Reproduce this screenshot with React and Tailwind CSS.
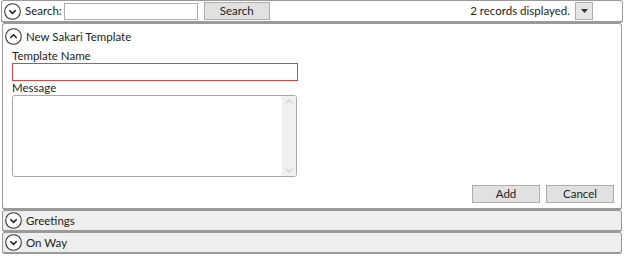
import React from 'react';

// Circled chevron toggle used by each expander header
const Toggle = ({ up = false }) => (
  <svg width="17" height="17" viewBox="0 0 17 17" className="shrink-0">
    <circle cx="8.5" cy="8.5" r="7.8" fill="white" stroke="#333" strokeWidth="1.1" />
    {up ? (
      <path d="M5.3 10 L8.5 6.8 L11.7 10" fill="none" stroke="#222" strokeWidth="1.6" />
    ) : (
      <path d="M5.3 7.2 L8.5 10.4 L11.7 7.2" fill="none" stroke="#222" strokeWidth="1.6" />
    )}
  </svg>
);

const Btn = ({ children, className = '' }) => (
  <button className={`h-[18px] border border-[#adadad] bg-[#e1e1e1] text-[11.5px] leading-none text-[#222] ${className}`}>
    {children}
  </button>
);

const Collapsed = ({ title }) => (
  <div className="h-[22px] mx-[2px] border border-[#9a9a9a] border-b-2 rounded-[3px] bg-[#eeeeee] flex items-center gap-[4px] px-[2px]">
    <Toggle />
    <span className="text-[11.5px] text-[#222]">{title}</span>
  </div>
);

export default function App() {
  return (
    <div className="w-[624px] h-[258px] bg-white text-[#222]" style={{ fontFamily: 'Lato, "Noto Sans", sans-serif' }}>
      {/* Search bar */}
      <div className="h-[23px] mx-[1px] border border-[#9a9a9a] border-b-2 rounded-[3px] flex items-center px-[2px]">
        <Toggle />
        <span className="text-[11.5px] ml-[4px]">Search:</span>
        <input className="ml-[2px] w-[134px] h-[17px] border border-[#abadb3] bg-white outline-none" />
        <Btn className="ml-[6px] w-[66px]">Search</Btn>
        <span className="ml-auto text-[11.5px] mr-[5px]">2 records displayed.</span>
        <button className="w-[18px] h-[18px] border border-[#adadad] bg-[#e5e5e5] flex items-center justify-center mr-[27px]">
          <svg width="7" height="4" viewBox="0 0 7 4"><path d="M0 0 H7 L3.5 4 Z" fill="#333" /></svg>
        </button>
      </div>

      {/* Expanded template panel */}
      <div className="h-[187px] mx-[2px] border border-[#9a9a9a] border-b-2 rounded-[3px] flex flex-col">
        <div className="h-[22px] flex items-center gap-[4px] px-[2px] pt-[3px]">
          <Toggle up />
          <span className="text-[11.5px]">New Sakari Template</span>
        </div>
        <div className="pl-[9px] pt-[3px] flex flex-col">
          <label className="text-[11.5px] leading-[14px]">Template Name</label>
          <input className="w-[286px] h-[18px] border border-[#e04343] outline-none" />
          <label className="text-[11.5px] leading-[14px]">Message</label>
          <div className="w-[285px] h-[82px] border border-[#a8a8a8] rounded-[3px] flex justify-end">
            <div className="w-[14px] h-full bg-[#f0f0f0] flex flex-col items-center justify-between py-[3px]">
              <svg width="8" height="5" viewBox="0 0 8 5"><path d="M0.5 4.5 L4 1 L7.5 4.5" fill="none" stroke="#c0c0c0" strokeWidth="1" /></svg>
              <svg width="8" height="5" viewBox="0 0 8 5"><path d="M0.5 0.5 L4 4 L7.5 0.5" fill="none" stroke="#c0c0c0" strokeWidth="1" /></svg>
            </div>
          </div>
        </div>
        <div className="flex justify-end gap-[6px] mt-[8px] pr-[7px]">
          <Btn className="w-[68px]">Add</Btn>
          <Btn className="w-[68px]">Cancel</Btn>
        </div>
      </div>

      <Collapsed title="Greetings" />
      <Collapsed title="On Way" />
    </div>
  );
}
